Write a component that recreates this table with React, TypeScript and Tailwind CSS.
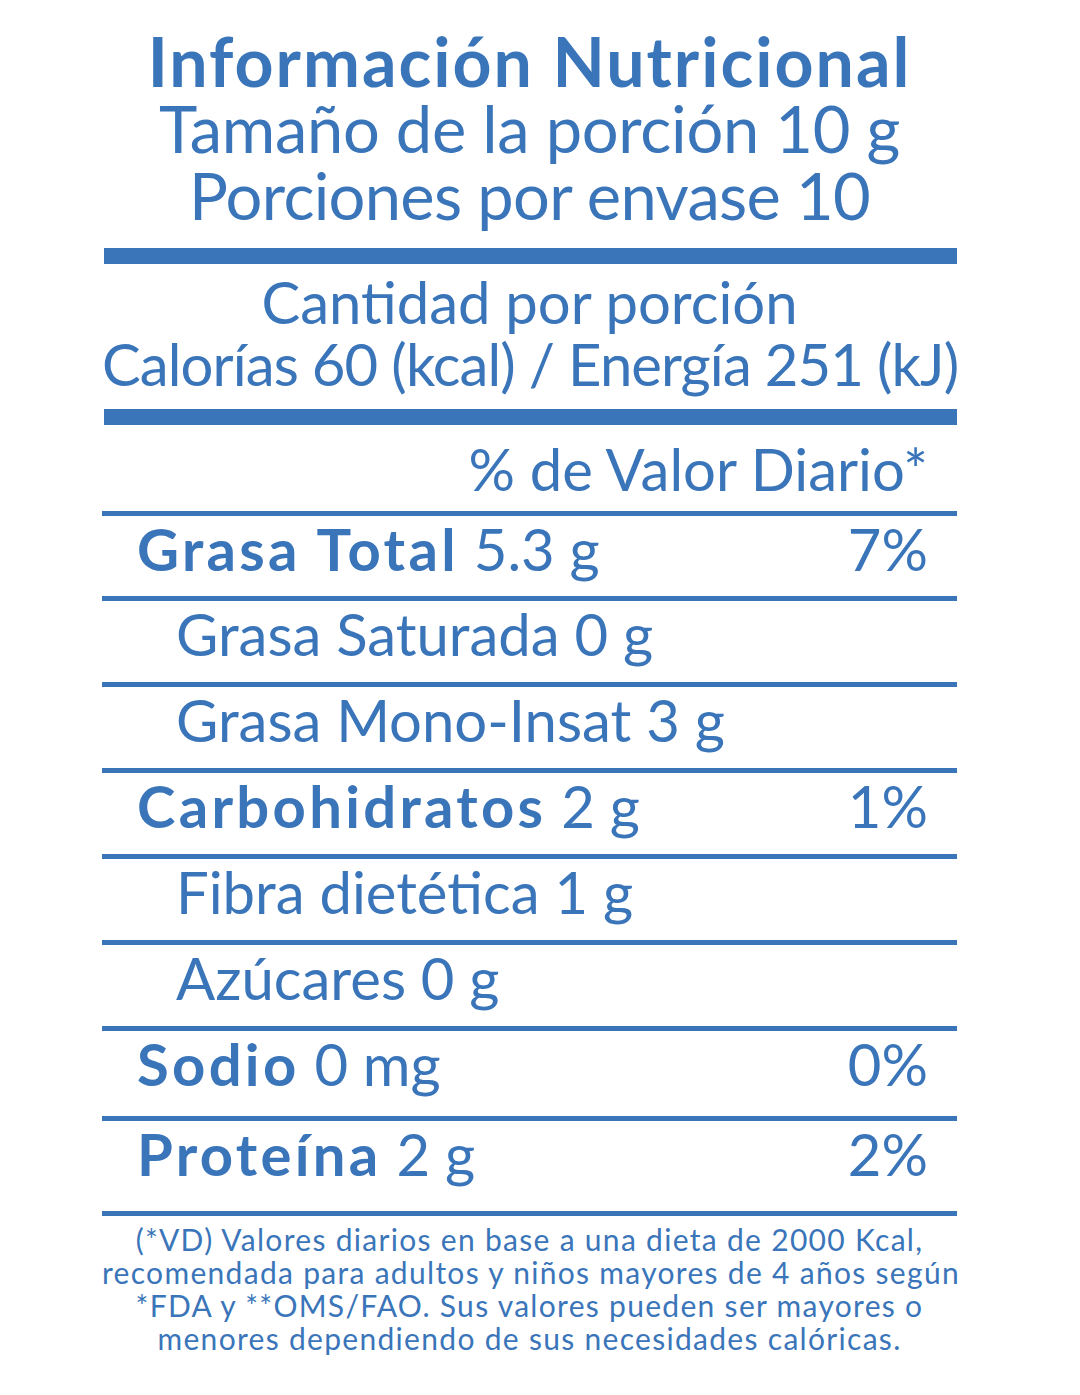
const rows = [
  { label: 'Grasa Total', value: '5.3 g', pct: '7%', bold: true, h: 'h-[80px]' },
  { label: 'Grasa Saturada', value: '0 g', pct: '', bold: false, h: 'h-[81px]' },
  { label: 'Grasa Mono-Insat', value: '3 g', pct: '', bold: false, h: 'h-[81px]' },
  { label: 'Carbohidratos', value: '2 g', pct: '1%', bold: true, h: 'h-[81px]' },
  { label: 'Fibra dietética', value: '1 g', pct: '', bold: false, h: 'h-[81px]' },
  { label: 'Azúcares', value: '0 g', pct: '', bold: false, h: 'h-[81px]' },
  { label: 'Sodio', value: '0 mg', pct: '0%', bold: true, h: 'h-[85px]' },
  { label: 'Proteína', value: '2 g', pct: '2%', bold: true, h: 'h-[90px]' },
];

function Line() {
  return <div className="h-[5px] bg-[#3a75ba]" />;
}

function Bar() {
  return <div className="ml-[2px] h-[16px] bg-[#3a75ba]" />;
}

export default function App() {
  return (
    <div className="w-[1080px] h-[1395px] bg-white text-[#3a75ba] font-['Lato',sans-serif]">
      <div className="ml-[102px] w-[855px] pt-[27px]">
        <div className="text-center whitespace-nowrap">
          <h1 className="text-[68px] leading-[68px] font-bold tracking-[2px]">Información Nutricional</h1>
          <p className="text-[65px] leading-[67px] tracking-[-0.3px]">Tamaño de la porción 10 g</p>
          <p className="text-[65px] leading-[67px] tracking-[-0.7px]">Porciones por envase 10</p>
        </div>

        <div className="mt-[19px]">
          <Bar />
        </div>

        <div className="mt-[7px] text-center text-[58px] leading-[62px] whitespace-nowrap">
          <p>Cantidad por porción</p>
          <p className="tracking-[-0.9px]">Calorías 60 (kcal) / Energía 251 (kJ)</p>
        </div>

        <div className="mt-[14px]">
          <Bar />
        </div>

        <p className="mt-[13px] mb-[11px] pr-[29px] text-right text-[58px] leading-[62px]">
          % de Valor Diario*
        </p>

        <Line />
        {rows.map((r) => (
          <div key={r.label}>
            <div
              className={`${r.h} flex justify-between pt-[2px] pr-[29px] text-[58px] leading-[62px] whitespace-nowrap ${
                r.bold ? 'pl-[35px]' : 'pl-[74px]'
              }`}
            >
              <span>
                {r.bold ? <span className="font-bold tracking-[3.3px]">{r.label}</span> : r.label} {r.value}
              </span>
              <span>{r.pct}</span>
            </div>
            <Line />
          </div>
        ))}

        <div className="mt-[7px] text-center text-[30px] leading-[33px] tracking-[1.3px] whitespace-nowrap">
          <p>(*VD) Valores diarios en base a una dieta de 2000 Kcal,</p>
          <p>recomendada para adultos y niños mayores de 4 años según</p>
          <p>*FDA y **OMS/FAO. Sus valores pueden ser mayores o</p>
          <p>menores dependiendo de sus necesidades calóricas.</p>
        </div>
      </div>
    </div>
  );
}
